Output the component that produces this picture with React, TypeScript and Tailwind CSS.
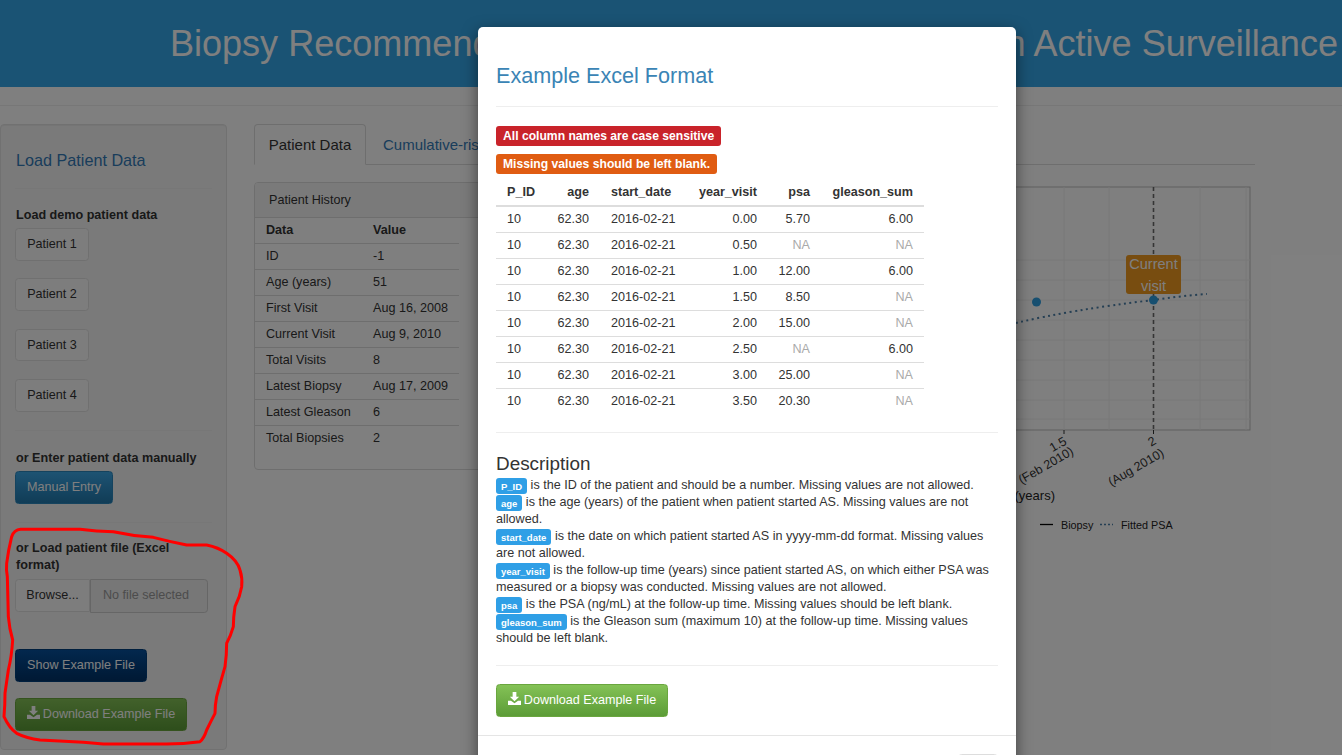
import React from 'react';

const patients = ['Patient 1', 'Patient 2', 'Patient 3', 'Patient 4'];

const history = [
  ['ID', '-1'],
  ['Age (years)', '51'],
  ['First Visit', 'Aug 16, 2008'],
  ['Current Visit', 'Aug 9, 2010'],
  ['Total Visits', '8'],
  ['Latest Biopsy', 'Aug 17, 2009'],
  ['Latest Gleason', '6'],
  ['Total Biopsies', '2'],
];

const example = [
  ['0.00', '5.70', '6.00'],
  ['0.50', 'NA', 'NA'],
  ['1.00', '12.00', '6.00'],
  ['1.50', '8.50', 'NA'],
  ['2.00', '15.00', 'NA'],
  ['2.50', 'NA', '6.00'],
  ['3.00', '25.00', 'NA'],
  ['3.50', '20.30', 'NA'],
];

const DownloadIcon = () => (
  <svg viewBox="0 0 14 14" className="w-[13px] h-[13px] inline-block align-[-1px] mr-[3px]" fill="currentColor">
    <path d="M5 0h4v5h3L7 10 2 5h3z" />
    <path d="M0 9.5h3.2L7 12l3.8-2.5H14V14H0z" />
  </svg>
);

const Tag = ({ children }: { children: React.ReactNode }) => (
  <span className="px-[5px] py-[2.5px] rounded-[3px] bg-[#2f9fe6] text-white text-[9.5px] font-bold">
    {children}
  </span>
);

const Plot = () => (
  <svg width="615" height="358" viewBox="640 182 615 358" className="shrink-0">
    <rect x="640" y="187" width="610" height="243" fill="white" stroke="#bdbdbd" strokeWidth="1" />
    {[260, 280, 300, 320, 340, 360, 380, 400, 419].map(y => (
      <line key={y} x1="640" x2="1250" y1={y} y2={y} stroke="#f0f0f0" />
    ))}
    {[1064, 1109, 1200, 1246].map(x => (
      <line key={x} x1={x} x2={x} y1="187" y2="430" stroke="#f0f0f0" />
    ))}
    <line x1="1153.5" x2="1153.5" y1="187" y2="430" stroke="#6a6a6a" strokeWidth="1.6" strokeDasharray="4 3" />
    <path d="M1016 323 Q1070 310 1153.5 300 Q1180 296 1207 294" fill="none" stroke="#4a7fa8" strokeWidth="2" strokeDasharray="2 3.5" />
    <circle cx="1036.5" cy="302" r="4.5" fill="#2e9fe0" />
    <circle cx="1153.5" cy="300" r="4.5" fill="#2e9fe0" />
    <rect x="1126" y="255" width="55" height="39" rx="3" fill="#f09a20" />
    <text x="1153.5" y="269" textAnchor="middle" fontSize="14.5" fill="white">Current</text>
    <text x="1153.5" y="291" textAnchor="middle" fontSize="14.5" fill="white">visit</text>
    <line x1="1064" x2="1064" y1="430" y2="434" stroke="#333" />
    <line x1="1153.5" x2="1153.5" y1="430" y2="434" stroke="#333" />
    <g fontSize="12.5" fill="#333" textAnchor="middle">
      <text transform="translate(1060 448) rotate(-30)">1.5</text>
      <text transform="translate(1048 469) rotate(-30)">(Feb 2010)</text>
      <text transform="translate(1154 445) rotate(-30)">2</text>
      <text transform="translate(1138 471) rotate(-30)">(Aug 2010)</text>
    </g>
    <text x="1055" y="500" textAnchor="end" fontSize="13" fill="#222">Follow-up time (years)</text>
    <line x1="1040" x2="1053" y1="524.5" y2="524.5" stroke="#000" strokeWidth="1.3" />
    <text x="1061" y="529" fontSize="10.8" fill="#222">Biopsy</text>
    <line x1="1100" x2="1113" y1="524.5" y2="524.5" stroke="#4a7fa8" strokeWidth="1.3" strokeDasharray="2 2" />
    <text x="1121" y="529" fontSize="10.8" fill="#222">Fitted PSA</text>
  </svg>
);

const Sidebar = () => (
  <aside className="w-[227px] h-[626px] shrink-0 bg-[#f5f5f5] border border-[#e3e3e3] rounded-[4px] pl-[15px] pr-[14px] pt-[26px] shadow-[inset_0_1px_1px_rgba(0,0,0,0.05)]">
    <h4 className="text-[16.2px] leading-[18px] text-[#337ab7]">Load Patient Data</h4>
    <div className="mt-[19px] -ml-px border-t border-[#eeeeee]" />
    <p className="mt-[18px] font-bold leading-[17px]">Load demo patient data</p>
    <div className="mt-[4px] -ml-px flex flex-col gap-[17.8px] items-start">
      {patients.map(p => (
        <button key={p} className="h-[32.6px] w-[74px] bg-[#fbfbfb] border border-[#e0e0e0] rounded-[3.6px] text-center">
          {p}
        </button>
      ))}
    </div>
    <div className="mt-[18px] -ml-px border-t border-[#eeeeee]" />
    <p className="mt-[19px] font-bold leading-[17px]">or Enter patient data manually</p>
    <button className="block mt-[4px] -ml-px h-[33px] w-[98px] rounded-[3.6px] text-white bg-linear-to-b from-[#3ba6e6] to-[#2179ad] border border-[#2a86bd]">
      Manual Entry
    </button>
    <div className="mt-[18px] -ml-px border-t border-[#eeeeee]" />
    <p className="mt-[17px] font-bold leading-[17px]">or Load patient file (Excel format)</p>
    <div className="mt-[5px] -ml-px flex w-[193px] h-[34px]">
      <div className="w-[75px] h-[33px] flex items-center justify-center bg-[#fbfbfb] border border-[#e0e0e0] rounded-l-[3.6px]">
        Browse...
      </div>
      <div className="flex-1 flex items-center pl-[12px] bg-[#eeeeee] border border-[#cccccc] rounded-r-[3.6px] text-[#999999]">
        No file selected
      </div>
    </div>
    <button className="block mt-[36px] -ml-px h-[33px] w-[132px] rounded-[3.6px] text-white bg-linear-to-b from-[#07509c] to-[#003268] border border-[#003f7d]">
      Show Example File
    </button>
    <button className="block mt-[16px] -ml-px h-[33px] w-[172px] rounded-[3.6px] text-white bg-linear-to-b from-[#84c256] to-[#5c9c37] border border-[#6aa63f]">
      <DownloadIcon />
      Download Example File
    </button>
  </aside>
);

const PatientHistory = () => (
  <div className="w-[376px] h-[288px] shrink-0 border border-[#dddddd] rounded-[4px] overflow-hidden">
    <div className="h-[35px] flex items-center pl-[14px] bg-[#f5f5f5] border-b border-[#dddddd]">
      Patient History
    </div>
    <table className="w-[204px] table-fixed border-collapse">
      <colgroup>
        <col className="w-[107px]" />
        <col className="w-[97px]" />
      </colgroup>
      <thead>
        <tr className="h-[25px] border-b border-[#dddddd] font-bold text-left">
          <th className="pl-[11px]">Data</th>
          <th className="pl-[11px]">Value</th>
        </tr>
      </thead>
      <tbody>
        {history.map(([k, v], i) => (
          <tr key={k} className={i < history.length - 1 ? 'h-[26px] border-b border-[#dddddd]' : 'h-[26px]'}>
            <td className="pl-[11px] whitespace-nowrap">{k}</td>
            <td className="pl-[11px] whitespace-nowrap">{v}</td>
          </tr>
        ))}
      </tbody>
    </table>
  </div>
);

const ExampleModal = () => (
  <div className="absolute left-[478px] top-[27px] w-[538px] h-[780px] bg-white rounded-[5px] shadow-[0_5px_15px_rgba(0,0,0,0.5)]">
    <div className="px-[18px]">
      <h3 className="pt-[36px] h-[79px] text-[21.6px] leading-[26px] text-[#3a84b5]">Example Excel Format</h3>
      <div className="border-t border-[#eeeeee]" />
      <div className="mt-[19px] flex flex-col items-start gap-[8px] text-white text-[12.15px] font-bold">
        <span className="h-[20px] leading-[20px] px-[7px] rounded-[3px] bg-[#c9232a]">All column names are case sensitive</span>
        <span className="h-[20px] leading-[20px] px-[7px] rounded-[3px] bg-[#e05c12]">Missing values should be left blank.</span>
      </div>
      <table className="mt-[6px] w-[428px] table-fixed border-collapse">
        <colgroup>
          <col className="w-[50px]" />
          <col className="w-[54px]" />
          <col className="w-[87px]" />
          <col className="w-[81px]" />
          <col className="w-[53px]" />
          <col className="w-[103px]" />
        </colgroup>
        <thead>
          <tr className="h-[26px] border-b-2 border-[#dddddd] font-bold">
            <th className="pl-[11px] text-left">P_ID</th>
            <th className="pr-[11px] text-right">age</th>
            <th className="pl-[11px] text-left">start_date</th>
            <th className="pr-[11px] text-right">year_visit</th>
            <th className="pr-[11px] text-right">psa</th>
            <th className="pr-[11px] text-right">gleason_sum</th>
          </tr>
        </thead>
        <tbody>
          {example.map((row, i) => (
            <tr key={row[0]} className={i < example.length - 1 ? 'h-[26px] border-b border-[#dddddd]' : 'h-[26px]'}>
              <td className="pl-[11px]">10</td>
              <td className="pr-[11px] text-right">62.30</td>
              <td className="pl-[11px] whitespace-nowrap">2016-02-21</td>
              <td className="pr-[11px] text-right">{row[0]}</td>
              <td className={row[1] === 'NA' ? 'pr-[11px] text-right text-[#aaaaaa]' : 'pr-[11px] text-right'}>{row[1]}</td>
              <td className={row[2] === 'NA' ? 'pr-[11px] text-right text-[#aaaaaa]' : 'pr-[11px] text-right'}>{row[2]}</td>
            </tr>
          ))}
        </tbody>
      </table>
      <div className="mt-[18px] border-t border-[#eeeeee]" />
      <h4 className="mt-[20px] text-[18.9px] leading-[21px]">Description</h4>
      <div className="mt-[3px] leading-[17px]">
        <div><Tag>P_ID</Tag> is the ID of the patient and should be a number. Missing values are not allowed.</div>
        <div><Tag>age</Tag> is the age (years) of the patient when patient started AS. Missing values are not allowed.</div>
        <div><Tag>start_date</Tag> is the date on which patient started AS in yyyy-mm-dd format. Missing values are not allowed.</div>
        <div><Tag>year_visit</Tag> is the follow-up time (years) since patient started AS, on which either PSA was measured or a biopsy was conducted. Missing values are not allowed.</div>
        <div><Tag>psa</Tag> is the PSA (ng/mL) at the follow-up time. Missing values should be left blank.</div>
        <div><Tag>gleason_sum</Tag> is the Gleason sum (maximum 10) at the follow-up time. Missing values should be left blank.</div>
      </div>
      <div className="mt-[18px] border-t border-[#eeeeee]" />
      <button className="block mt-[18px] h-[33px] w-[172px] rounded-[3.6px] text-white bg-linear-to-b from-[#84c256] to-[#5c9c37] border border-[#6aa63f]">
        <DownloadIcon />
        Download Example File
      </button>
    </div>
    <div className="mt-[18px] border-t border-[#e5e5e5] flex justify-end pr-[18px] pt-[18px]">
      <button className="h-[33px] w-[40px] border border-[#dddddd] rounded-[3.6px] bg-[#fbfbfb]" />
    </div>
  </div>
);

// hand annotation round the file controls, traced from the screenshot
const RedCircle = () => (
  <svg viewBox="0 0 900 975" width="300" height="325" className="absolute left-0 top-[430px]" fill="none">
    <path
      d="M35 320 Q42 300 62 298 L240 298 Q290 305 340 305 Q400 318 460 322 Q510 335 560 345 L620 345 Q655 352 680 370 Q712 392 720 420 Q728 445 725 470 Q720 500 705 530 Q700 560 700 590 Q692 618 680 640 Q680 675 675 710 Q662 755 650 800 Q645 825 645 850 Q632 875 620 900 Q612 925 600 935 Q550 942 500 942 L310 942 L250 937 L120 930 Q80 925 50 910 Q28 895 12 860 Q15 825 15 790 L25 720 Q35 680 38 630 Q28 595 25 560 L22 440 Q18 420 20 400 Q25 360 35 320 Z"
      stroke="#ff0000"
      strokeWidth="9"
      strokeLinejoin="round"
    />
  </svg>
);

export default function App() {
  return (
    <div className="relative w-[1342px] h-[755px] overflow-hidden bg-white text-[#333333] text-[12.6px] font-['Liberation_Sans',Arial,sans-serif]">
      <header className="h-[87px] bg-[#34a6e8] flex items-center justify-end pr-[4px]">
        <h1 className="text-[36.06px] leading-[40px] text-white whitespace-nowrap">
          Biopsy Recommender for Prostate Cancer Patients in Active Surveillance
        </h1>
      </header>
      <div className="mt-[18px] border-t border-[#eeeeee]" />
      <main className="mt-[18px] flex gap-[27px]">
        <Sidebar />
        <section className="w-[1001px] shrink-0">
          <nav className="h-[41px] flex items-end border-b border-[#dddddd] text-[15px]">
            <span className="h-[41px] w-[112px] pt-[2px] flex items-center justify-center bg-white border border-[#dddddd] border-b-white rounded-t-[4px] -mb-px">
              Patient Data
            </span>
            <span className="h-[40px] ml-[17px] pt-[2px] flex items-center text-[#337ab7]">Cumulative-risk Biopsy</span>
          </nav>
          <div className="mt-[17px] flex items-start">
            <PatientHistory />
            <div className="ml-[10px]">
              <Plot />
            </div>
          </div>
        </section>
      </main>
      <div className="absolute inset-0 bg-black/50" />
      <RedCircle />
      <ExampleModal />
    </div>
  );
}
